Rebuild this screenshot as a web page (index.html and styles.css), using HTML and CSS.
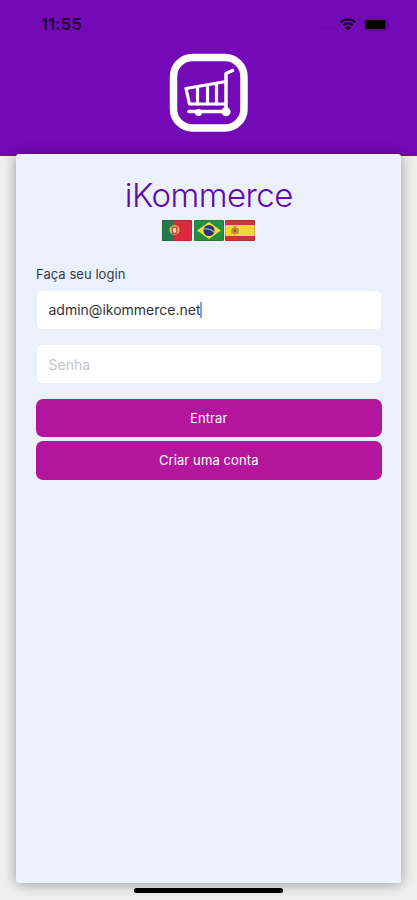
FILE: index.html
```html
<!DOCTYPE html>
<html lang="pt">
<head>
<meta charset="utf-8">
<title>iKommerce</title>
<link rel="stylesheet" href="styles.css">
</head>
<body>
<div class="screen">
  <header class="header">
    <div class="status">
      <span class="time">11:55</span>
      <div class="indicators">
        <span class="signal"><i></i><i></i><i></i><i></i></span>
        <svg class="wifi" width="18" height="13" viewBox="0 0 18 13">
          <path d="M1.8 4.2a10.8 10.8 0 0 1 14.4 0M4.4 7.2a7 7 0 0 1 9.2 0" fill="none" stroke="#17001f" stroke-width="2.3"/>
          <path d="M6.2 9.4a4.3 4.3 0 0 1 5.6 0L9 12.4z" fill="#17001f"/>
        </svg>
        <svg class="battery" width="26" height="13" viewBox="0 0 26 13">
          <rect x=".5" y="1" width="22.5" height="11" rx="3" fill="none" stroke="#5b0596"/>
          <rect x="1.5" y="2" width="20" height="9" rx="1.5" fill="#050008"/>
          <path d="M24 4.5q2 2 0 4z" fill="#4c047f"/>
        </svg>
      </div>
    </div>
    <svg class="logo" width="80" height="80" viewBox="0 0 80 80" fill="none" stroke="#fff" stroke-linecap="round" stroke-linejoin="round">
      <rect x="4.5" y="4.5" width="70.5" height="70.5" rx="19" stroke-width="7.5"/>
      <path d="M63.5 17.5L57 20.5V56" stroke-width="3.5"/>
      <path d="M57 28.5L17 35.5L20.5 51H56" stroke-width="3.2"/>
      <path d="M28.5 34V51M38.5 32.5V51M47.5 31V51" stroke-width="3.2"/>
      <path d="M20 58.5H56" stroke-width="3.5"/>
      <circle cx="29.5" cy="59.5" r="3.5" fill="#fff" stroke="none"/>
      <circle cx="57" cy="58.7" r="4.6" fill="#fff" stroke="none"/>
    </svg>
  </header>
  <main class="card">
    <h1 class="title">iKommerce</h1>
    <div class="flags">
      <svg width="30" height="21" viewBox="0 0 30 21">
        <rect width="30" height="21" rx="1" fill="#d9283f"/><path d="M0 0h12v21H0z" fill="#247a4b"/>
        <circle cx="12.5" cy="10" r="5" fill="#d8bd50"/><path d="M9.5 6.5h6v5q0 3-3 3t-3-3z" fill="#d34a49"/><path d="M11 8h3v3q0 1.5-1.5 2Q11 12.5 11 11z" fill="#f1dfd4"/>
        <rect x=".5" y=".5" width="29" height="20" rx="1" fill="none" stroke="#333" stroke-opacity=".25"/>
      </svg>
      <svg width="30" height="21" viewBox="0 0 30 21">
        <rect width="30" height="21" rx="1" fill="#239044"/><path d="M15 2l12 8.5L15 19 3 10.5z" fill="#f1dc32"/>
        <circle cx="15" cy="10.5" r="5.5" fill="#29347d"/><path d="M9.7 9q6-1 10.5 3" fill="none" stroke="#a9bad5" stroke-width="1.1"/>
        <rect x=".5" y=".5" width="29" height="20" rx="1" fill="none" stroke="#333" stroke-opacity=".25"/>
      </svg>
      <svg width="30" height="21" viewBox="0 0 30 21">
        <rect width="30" height="21" rx="1" fill="#d5313b"/><path d="M0 5h30v11H0z" fill="#fcd33d"/>
        <path d="M7 8h6v4q0 2.5-3 2.5T7 12z" fill="#c08b45"/><path d="M8.5 6h3v2h-3zM6 9h1v5H6zM13 9h1v5h-1z" fill="#c79a54"/><path d="M9 9h2v3H9z" fill="#ae5140"/>
        <rect x=".5" y=".5" width="29" height="20" rx="1" fill="none" stroke="#333" stroke-opacity=".25"/>
      </svg>
    </div>
    <p class="label">Faça seu login</p>
    <div class="field"><span class="value">admin@ikommerce.net</span><span class="caret"></span></div>
    <div class="field"><span class="placeholder">Senha</span></div>
    <button class="button entrar">Entrar</button>
    <button class="button criar">Criar uma conta</button>
  </main>
  <div class="home"></div>
</div>
</body>
</html>
```
FILE: styles.css
```css
* { box-sizing: border-box; }
body { margin: 0; background: #efefef; font-family: Inter, sans-serif; }
.screen { width: 417px; height: 900px; overflow: hidden; display: flex; flex-direction: column; align-items: center; }
.header { flex: none; width: 100%; height: 155.5px; background: #7409b7; display: flex; flex-direction: column; align-items: center; }
.status { width: 100%; height: 48px; padding: 0 27px 0 41px; display: flex; align-items: center; justify-content: space-between; }
.time { font-size: 16.5px; font-weight: 600; color: #1d0030; letter-spacing: .2px; }
.indicators { display: flex; align-items: center; }
.signal { display: flex; gap: 2px; margin: 7px 5px 0 0; }
.signal i { width: 3px; height: 1.5px; background: #6107a0; }
.wifi { margin-right: 7px; }
.logo { margin-top: 5px; }
.card { flex: none; width: 385px; height: 729.5px; margin-top: -2px; padding: 21px 19.5px 0 20px; background: #eaf1fb; border-radius: 3px; box-shadow: 0 1px 14px rgba(0, 0, 0, .36); display: flex; flex-direction: column; }
.title { margin: 0; height: 40px; line-height: 40px; font-size: 33px; font-weight: 300; text-align: center; color: #6209ae; letter-spacing: -.55px; }
.flags { height: 30px; padding-top: 5px; display: flex; justify-content: center; gap: 1.5px; }
.label { margin: 19px 0 6px; height: 20px; line-height: 20px; font-size: 13px; color: #373b49; letter-spacing: .05px; }
.field { flex: none; height: 40px; margin: 0 0 14.5px; padding: 0 11.5px; background: #fff; border: 1px solid #edf0f4; border-radius: 6px; display: flex; align-items: center; font-size: 14px; color: #333; }
.caret { width: 2px; height: 16px; background: #8797f5; }
.placeholder { color: #c4c4c6; }
.button { flex: none; height: 38.5px; padding: 0; border: 0; border-radius: 7px; background: #b3169d; color: #fff; font: 400 13px Inter, sans-serif; letter-spacing: .1px; }
.criar { margin-top: 4px; }
.home { flex: none; width: 149px; height: 4.5px; margin-top: 5px; border-radius: 3px; background: #000; }
```
